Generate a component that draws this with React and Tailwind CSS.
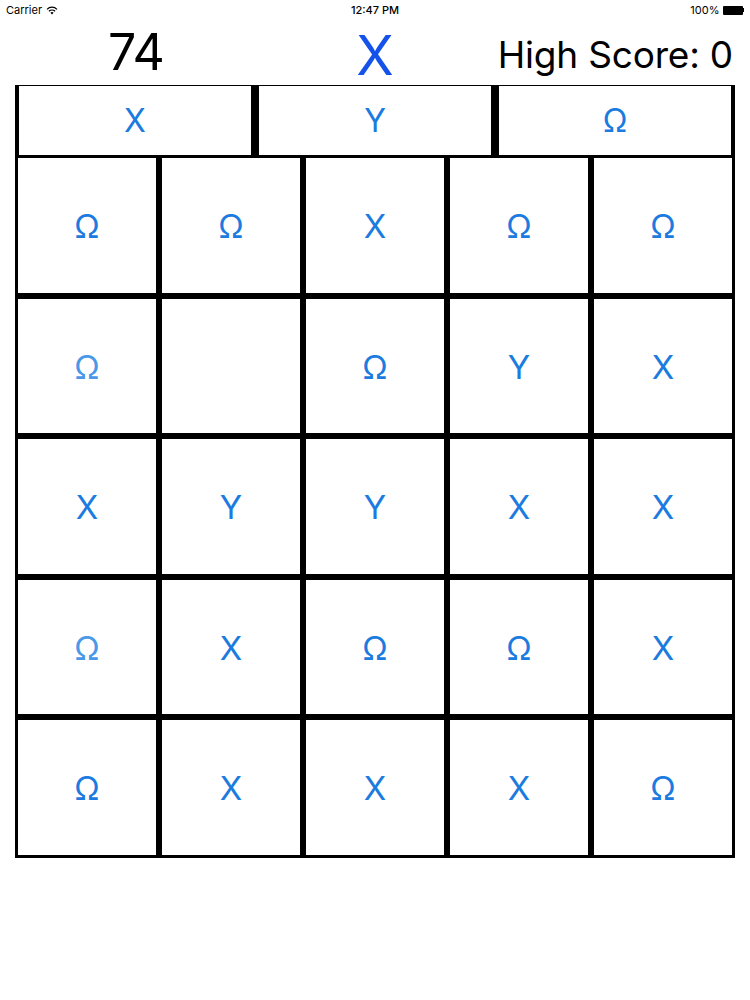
const TOP = ['X', 'Y', 'Ω'];

// [label, light]
const GRID = [
  [['Ω'], ['Ω'], ['X'], ['Ω'], ['Ω']],
  [['Ω', true], [''], ['Ω'], ['Y'], ['X']],
  [['X'], ['Y'], ['Y'], ['X'], ['X']],
  [['Ω', true], ['X'], ['Ω'], ['Ω'], ['X']],
  [['Ω'], ['X'], ['X'], ['X'], ['Ω']],
];

function StatusBar() {
  return (
    <div className="h-[20px] flex items-center justify-between px-[6px] text-[11px] text-black">
      <div className="flex items-center gap-[4px] w-[120px]">
        <span>Carrier</span>
        <svg width="12" height="9" viewBox="0 0 12 9">
          <path d="M6 8.5 L4.4 6.8 A2.3 2.3 0 0 1 7.6 6.8 Z" fill="black" />
          <path d="M2.9 5.3 A4.4 4.4 0 0 1 9.1 5.3" stroke="black" strokeWidth="1.2" fill="none" />
          <path d="M1 3.3 A7 7 0 0 1 11 3.3" stroke="black" strokeWidth="1.2" fill="none" />
        </svg>
      </div>
      <span className="font-medium">12:47 PM</span>
      <div className="flex items-center justify-end gap-[3px] w-[120px]">
        <span>100%</span>
        <div className="flex items-center">
          <div className="w-[20px] h-[9px] bg-black rounded-[1px]" />
          <div className="w-[1.5px] h-[4px] bg-black" />
        </div>
      </div>
    </div>
  );
}

export default function App() {
  return (
    <div className="w-[750px] h-[1000px] bg-white" style={{ fontFamily: 'Inter, "Liberation Sans", sans-serif' }}>
      <StatusBar />

      {/* Header */}
      <div className="h-[65px] relative">
        <div className="absolute left-[108px] top-[7px] text-[50px] leading-none text-black tracking-[-1px]">74</div>
        <div className="absolute left-0 right-0 top-[8px] text-center text-[55px] leading-none text-[#1552ea]">X</div>
        <div className="absolute right-[17px] top-[16px] text-[37px] leading-none text-black tracking-[-0.2px]">High Score: 0</div>
      </div>

      {/* Choice buttons */}
      <div className="ml-[15px] w-[720px] h-[70px] flex">
        {TOP.map((t, i) => (
          <div
            key={i}
            className="flex-1 border-x-4 border-t border-black flex items-center justify-center text-[32px] text-[#1b7be0]"
          >
            {t}
          </div>
        ))}
      </div>

      {/* Board */}
      <div className="ml-[15px] w-[720px] grid grid-cols-5">
        {GRID.flat().map(([label, light], i) => (
          <div
            key={i}
            className={`h-[140.5px] border-[3px] border-black flex items-center justify-center pt-[3px] text-[33px] ${
              light ? 'text-[#4a98e8]' : 'text-[#1b7be0]'
            }`}
          >
            {label}
          </div>
        ))}
      </div>
    </div>
  );
}
